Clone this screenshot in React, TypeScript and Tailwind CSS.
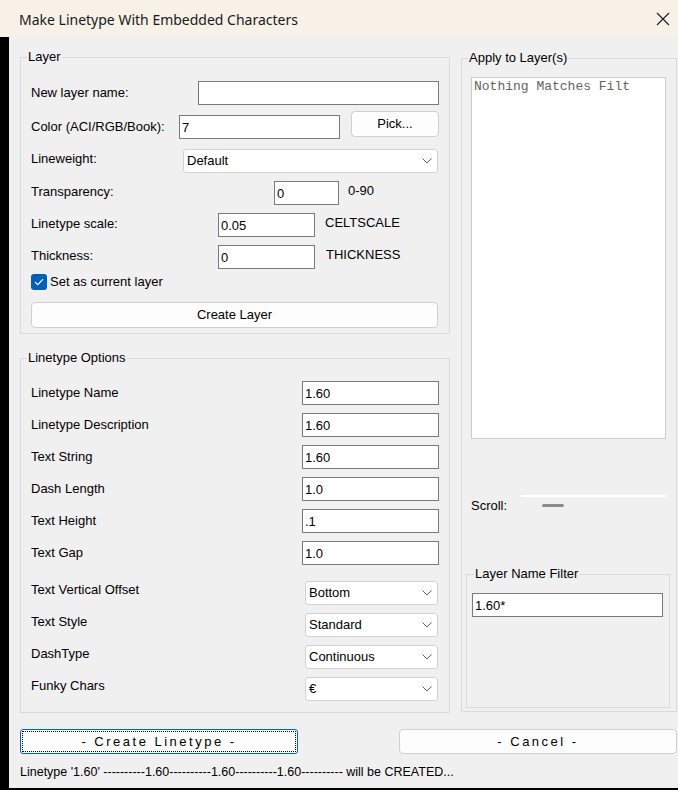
import React from "react";

type BoxProps = { value: string; className: string };

// Classic sunken edit box
function EditBox({ value, className }: BoxProps) {
  return (
    <div
      className={`h-[24px] border border-[#7a7a7a] bg-white pl-[2px] flex items-center text-[13px] leading-none text-black ${className}`}
    >
      {value}
    </div>
  );
}

function Chevron() {
  return (
    <svg width="10" height="6" viewBox="0 0 10 6" className="shrink-0">
      <path d="M0.5 0.5 L5 5 L9.5 0.5" fill="none" stroke="#5f5f5f" strokeWidth="1" />
    </svg>
  );
}

// Drop-down combo box
function Combo({ value, className }: BoxProps) {
  return (
    <div
      className={`h-[24px] border border-[#d3d3d3] rounded-[3px] bg-white pl-[3px] pr-[5px] flex items-center justify-between text-[13px] text-black ${className}`}
    >
      <span>{value}</span>
      <Chevron />
    </div>
  );
}

function Group({
  title,
  className,
  children,
}: {
  title: string;
  className: string;
  children: React.ReactNode;
}) {
  return (
    <fieldset className={`border border-[#dadada] px-0 min-w-0 ${className}`}>
      <legend className="ml-[6px] px-[1px] text-[13px] leading-[16px] text-black">{title}</legend>
      {children}
    </fieldset>
  );
}

function LayerGroup() {
  return (
    <Group title="Layer" className="mt-[12px]">
      <div className="pt-[16px] pb-[5px] pl-[10px] pr-[10px] flex flex-col text-[13px]">
        <div className="h-[24px] flex items-center">
          <span className="flex-1">New layer name:</span>
          <EditBox value="" className="w-[241px]" />
        </div>
        <div className="mt-[10px] h-[24px] flex items-start">
          <span className="w-[148px] h-[24px] flex items-center">Color (ACI/RGB/Book):</span>
          <EditBox value="7" className="w-[161px]" />
          <button className="ml-[11px] mt-[-4px] h-[26px] w-[88px] rounded-[4px] border border-[#d0d0d0] bg-[#fdfdfd] text-[13px]">
            Pick...
          </button>
        </div>
        <div className="mt-[10px] h-[24px] flex items-center">
          <span className="w-[152px] mb-[5px]">Lineweight:</span>
          <Combo value="Default" className="w-[255px]" />
        </div>
        <div className="mt-[8px] h-[24px] flex items-center">
          <span className="w-[243px] mb-[2px]">Transparency:</span>
          <EditBox value="0" className="w-[65px]" />
          <span className="ml-[9px] mb-[5px]">0-90</span>
        </div>
        <div className="mt-[8px] h-[24px] flex items-center">
          <span className="w-[187px] mb-[2px]">Linetype scale:</span>
          <EditBox value="0.05" className="w-[97px]" />
          <span className="ml-[10px] mb-[5px]">CELTSCALE</span>
        </div>
        <div className="mt-[8px] h-[24px] flex items-center">
          <span className="w-[187px] mb-[2px]">Thickness:</span>
          <EditBox value="0" className="w-[97px]" />
          <span className="ml-[11px] mb-[5px]">THICKNESS</span>
        </div>
        <div className="mt-[5px] h-[16px] flex items-center">
          <span className="w-[16px] h-[16px] rounded-[3px] bg-[#005fb8] flex items-center justify-center">
            <svg width="10" height="8" viewBox="0 0 10 8">
              <path d="M1 4 L3.8 6.6 L9 1.2" fill="none" stroke="#ffffff" strokeWidth="1.2" />
            </svg>
          </span>
          <span className="ml-[3px]">Set as current layer</span>
        </div>
        <button className="mt-[12px] h-[26px] w-[407px] rounded-[4px] border border-[#d0d0d0] bg-[#fdfdfd] text-[13px]">
          Create Layer
        </button>
      </div>
    </Group>
  );
}

const textRows: [string, string][] = [
  ["Linetype Name", "1.60"],
  ["Linetype Description", "1.60"],
  ["Text String", "1.60"],
  ["Dash Length", "1.0"],
  ["Text Height", ".1"],
  ["Text Gap", "1.0"],
];

const comboRows: [string, string][] = [
  ["Text Vertical Offset", "Bottom"],
  ["Text Style", "Standard"],
  ["DashType", "Continuous"],
  ["Funky Chars", "€"],
];

function LinetypeGroup() {
  return (
    <Group title="Linetype Options" className="mt-[16px]">
      <div className="pt-[15px] pb-[11px] pl-[10px] pr-[10px] flex flex-col text-[13px]">
        <div className="flex flex-col gap-[8px]">
          {textRows.map(([label, value]) => (
            <div key={label} className="h-[24px] flex items-center">
              <span className="flex-1">{label}</span>
              <EditBox value={value} className="w-[137px]" />
            </div>
          ))}
        </div>
        <div className="mt-[16px] flex flex-col gap-[8px]">
          {comboRows.map(([label, value]) => (
            <div key={label} className="h-[24px] flex items-center">
              <span className="flex-1 mb-[6px]">{label}</span>
              <Combo value={value} className="w-[133px] mr-[1px]" />
            </div>
          ))}
        </div>
      </div>
    </Group>
  );
}

function ApplyGroup() {
  return (
    <Group title="Apply to Layer(s)" className="mt-[13px]">
      <div className="pt-[11px] flex flex-col">
        <div className="ml-[9px] mr-[10px] h-[362px] border border-[#cccccc] bg-white pl-[2px] pt-[1px] font-['Liberation_Mono',monospace] text-[13px] leading-[16px] text-[#636363]">
          Nothing Matches Filt
        </div>
        <div className="mt-[56px] ml-[9px] flex items-start">
          <span className="w-[50px] mt-[3px] text-[13px] leading-[16px]">Scroll:</span>
          <div className="flex flex-col">
            <div className="w-[145px] h-[2px] bg-white" />
            <div className="ml-[21px] mt-[7px] w-[22px] h-[3px] rounded-full bg-[#8c8c8c]" />
          </div>
        </div>
        <fieldset className="mt-[52px] ml-[4px] mr-[6px] mb-[3px] border border-[#dadada] px-0 min-w-0">
          <legend className="ml-[7px] px-[1px] text-[13px] leading-[16px]">Layer Name Filter</legend>
          <div className="pt-[11px] pb-[90px] pl-[5px] pr-[6px]">
            <EditBox value="1.60*" className="w-[191px]" />
          </div>
        </fieldset>
      </div>
    </Group>
  );
}

export default function App() {
  return (
    <div className="w-[678px] h-[790px] bg-[#f0f0f0] flex flex-col font-['Liberation_Sans',Arial,sans-serif] text-black overflow-hidden">
      {/* title bar */}
      <div className="h-[37px] shrink-0 bg-[#f7f1e8] flex items-center justify-between pl-[19px] pr-[8px]">
        <span className="font-['Noto_Sans',sans-serif] text-[14px] text-[#1a1a1a] mt-[1px]">
          Make Linetype With Embedded Characters
        </span>
        <svg width="14" height="14" viewBox="0 0 14 14">
          <path d="M1 1 L13 13 M13 1 L1 13" stroke="#1a1a1a" strokeWidth="1.1" />
        </svg>
      </div>
      <div className="flex-1 flex">
        <div className="w-[9px] bg-black" />
        <div className="flex-1 flex flex-col pl-[11px] pr-[1px]">
          <div className="flex gap-[11px]">
            <div className="w-[430px] flex flex-col">
              <LayerGroup />
              <LinetypeGroup />
            </div>
            <div className="w-[216px] flex flex-col">
              <ApplyGroup />
            </div>
          </div>
          <div className="mt-[16px] flex justify-between">
            <button className="h-[25px] w-[278px] rounded-[3px] border border-[#0067c0] bg-[#fdfdfd] outline-dotted outline-1 outline-black outline-offset-[-3px] font-['Liberation_Sans_Narrow','Arial_Narrow',sans-serif] text-[13px] tracking-[2.5px]">
              - Create Linetype -
            </button>
            <button className="h-[25px] w-[278px] rounded-[4px] border border-[#d0d0d0] bg-[#fdfdfd] font-['Liberation_Sans_Narrow','Arial_Narrow',sans-serif] text-[13px] tracking-[2.5px]">
              - Cancel -
            </button>
          </div>
          <div className="mt-[10px] h-[16px] leading-[16px] text-[12.5px] font-['Liberation_Sans_Narrow','Arial_Narrow',sans-serif] whitespace-nowrap">
            Linetype '1.60' ----------1.60----------1.60----------1.60---------- will be CREATED...
          </div>
        </div>
      </div>
      <div className="h-[2px] shrink-0 bg-black" />
    </div>
  );
}
